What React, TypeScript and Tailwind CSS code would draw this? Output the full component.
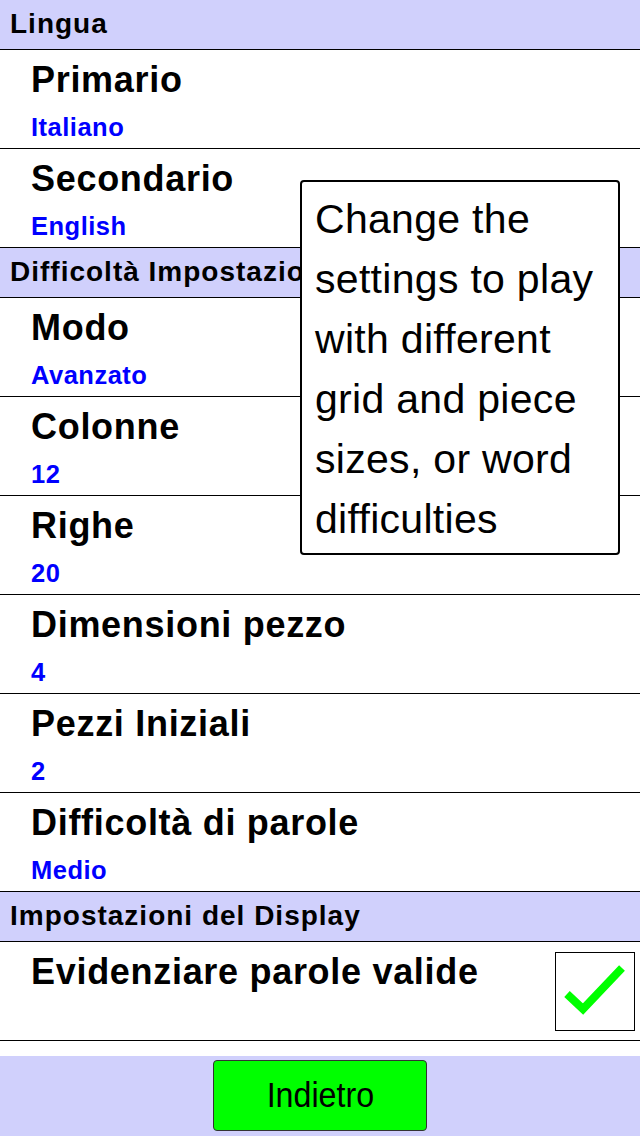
import React from "react";

/**
 * One settings entry: a title and, optionally, its current value.
 */
interface SettingItem {
  label: string;
  value?: string;
  checked?: boolean;
}

interface Section {
  title: string;
  items: SettingItem[];
}

const sections: Section[] = [
  {
    title: "Lingua",
    items: [
      { label: "Primario", value: "Italiano" },
      { label: "Secondario", value: "English" },
    ],
  },
  {
    title: "Difficoltà Impostazioni",
    items: [
      { label: "Modo", value: "Avanzato" },
      { label: "Colonne", value: "12" },
      { label: "Righe", value: "20" },
      { label: "Dimensioni pezzo", value: "4" },
      { label: "Pezzi Iniziali", value: "2" },
      { label: "Difficoltà di parole", value: "Medio" },
    ],
  },
  {
    title: "Impostazioni del Display",
    items: [{ label: "Evidenziare parole valide", checked: true }],
  },
];

function SectionHeader({ title }: { title: string }) {
  return (
    <div className="h-[50px] shrink-0 border-b border-black bg-[#d0d0fc] pl-[10px]">
      <span className="text-[28px] font-bold leading-[47px] tracking-[1px] text-black whitespace-nowrap">
        {title}
      </span>
    </div>
  );
}

function SettingRow({ item }: { item: SettingItem }) {
  return (
    <div className="flex h-[99px] shrink-0 border-b border-black bg-white">
      <div className="flex-1 pl-[31px] pt-[10px]">
        <div className="text-[36px] font-bold leading-[40px] tracking-[0.7px] text-black whitespace-nowrap">
          {item.label}
        </div>
        {item.value && (
          <div className="mt-[12px] text-[25.5px] font-bold leading-[30px] tracking-[0.5px] text-[#0000ff]">
            {item.value}
          </div>
        )}
      </div>
      {item.checked !== undefined && (
        <div className="mr-[5px] mt-[10px] h-[79px] w-[80px] border border-black bg-white">
          {item.checked && (
            <svg viewBox="0 0 78 77" className="h-full w-full">
              <path
                d="M11 41 L27 56 L66 15"
                fill="none"
                stroke="#00ff00"
                strokeWidth={8}
              />
            </svg>
          )}
        </div>
      )}
    </div>
  );
}

export default function App() {
  return (
    <div
      className="relative flex h-[1136px] w-[640px] flex-col overflow-hidden bg-white"
      style={{ fontFamily: '"Liberation Sans", Arial, sans-serif' }}
    >
      {sections.map((section) => (
        <React.Fragment key={section.title}>
          <SectionHeader title={section.title} />
          {section.items.map((item) => (
            <SettingRow key={item.label} item={item} />
          ))}
        </React.Fragment>
      ))}

      <div className="flex-1" />

      {/* Bottom bar */}
      <div className="flex h-[80px] shrink-0 justify-center bg-[#d0d0fc] pt-[4px]">
        <button className="h-[71px] w-[214px] rounded-[4px] border border-[#333] bg-[#00ff00] text-[35px] text-black">
          <span className="inline-block scale-x-[0.92]">Indietro</span>
        </button>
      </div>

      {/* Hint popup */}
      <div className="absolute left-[300px] top-[180px] h-[375px] w-[320px] rounded-[4px] border-2 border-black bg-white pl-[13px] pt-[7px]">
        <p className="text-[41px] leading-[60px] tracking-[0.3px] text-black">
          Change the
          <br />
          settings to play
          <br />
          with different
          <br />
          grid and piece
          <br />
          sizes, or word
          <br />
          difficulties
        </p>
      </div>
    </div>
  );
}
